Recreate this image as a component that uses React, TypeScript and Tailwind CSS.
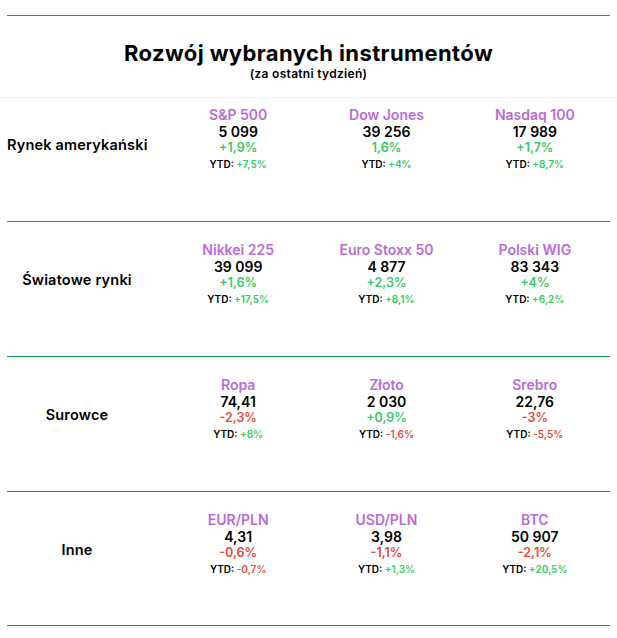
const up = "text-[#35c963]"
const down = "text-[#e8473a]"

type Item = {
  name: string
  value: string
  week: string
  ytd: string
}

const sections: { label: string; items: Item[] }[] = [
  {
    label: "Rynek amerykański",
    items: [
      { name: "S&P 500", value: "5 099", week: "+1,9%", ytd: "+7,5%" },
      { name: "Dow Jones", value: "39 256", week: "1,6%", ytd: "+4%" },
      { name: "Nasdaq 100", value: "17 989", week: "+1,7%", ytd: "+8,7%" },
    ],
  },
  {
    label: "Światowe rynki",
    items: [
      { name: "Nikkei 225", value: "39 099", week: "+1,6%", ytd: "+17,5%" },
      { name: "Euro Stoxx 50", value: "4 877", week: "+2,3%", ytd: "+8,1%" },
      { name: "Polski WIG", value: "83 343", week: "+4%", ytd: "+6,2%" },
    ],
  },
  {
    label: "Surowce",
    items: [
      { name: "Ropa", value: "74,41", week: "-2,3%", ytd: "+8%" },
      { name: "Złoto", value: "2 030", week: "+0,9%", ytd: "-1,6%" },
      { name: "Srebro", value: "22,76", week: "-3%", ytd: "-5,5%" },
    ],
  },
  {
    label: "Inne",
    items: [
      { name: "EUR/PLN", value: "4,31", week: "-0,6%", ytd: "-0,7%" },
      { name: "USD/PLN", value: "3,98", week: "-1,1%", ytd: "+1,3%" },
      { name: "BTC", value: "50 907", week: "-2,1%", ytd: "+20,5%" },
    ],
  },
]

function tone(v: string) {
  return v.startsWith("-") ? down : up
}

function Cell({ item }: { item: Item }) {
  return (
    <div className="flex flex-col items-center text-center">
      <div className="text-[14px] leading-[16px] font-semibold text-[#b96bd9]">{item.name}</div>
      <div className="text-[14px] leading-[17px] font-semibold text-black">{item.value}</div>
      <div className={`text-[12.5px] leading-[16px] font-semibold ${tone(item.week)}`}>{item.week}</div>
      <div className="text-[10px] leading-[16px] font-semibold text-black">
        YTD: <span className={tone(item.ytd)}>{item.ytd}</span>
      </div>
    </div>
  )
}

export default function App() {
  return (
    <div className="w-[617px] bg-white pt-[15px] font-['Inter','Liberation_Sans',sans-serif] text-black">
      <div className="mx-[7px] h-px bg-[#1f9d45]" />

      {/* Header */}
      <div className="mt-[24px] text-center">
        <h1 className="text-[22px] leading-[26px] font-bold tracking-[0.4px]">Rozwój wybranych instrumentów</h1>
        <p className="mt-[1px] text-[12px] leading-[14px] font-semibold tracking-[0.3px]">(za ostatni tydzień)</p>
      </div>

      <div className="mt-[16px] h-px bg-[#f1f1f1]" />

      {sections.map((section, index) => (
        <div key={section.label}>
          {index > 0 && <div className="mx-[7px] h-px bg-[#1f9d45]" />}
          <div className={`flex items-center pl-[7px] ${index === 0 ? "pt-[9px] pb-[49px]" : index === 3 ? "pt-[20px] pb-[48px]" : "pt-[20px] pb-[49px]"}`}>
            <div className="w-[140px] pt-[10px] text-center text-[14.5px] font-semibold tracking-[0.2px] whitespace-nowrap">
              {section.label}
            </div>
            <div className="ml-[17px] grid w-[445px] grid-cols-3">
              {section.items.map((item) => (
                <Cell key={item.name} item={item} />
              ))}
            </div>
          </div>
        </div>
      ))}

      <div className="mx-[7px] h-px bg-[#1f9d45]" />
    </div>
  )
}
